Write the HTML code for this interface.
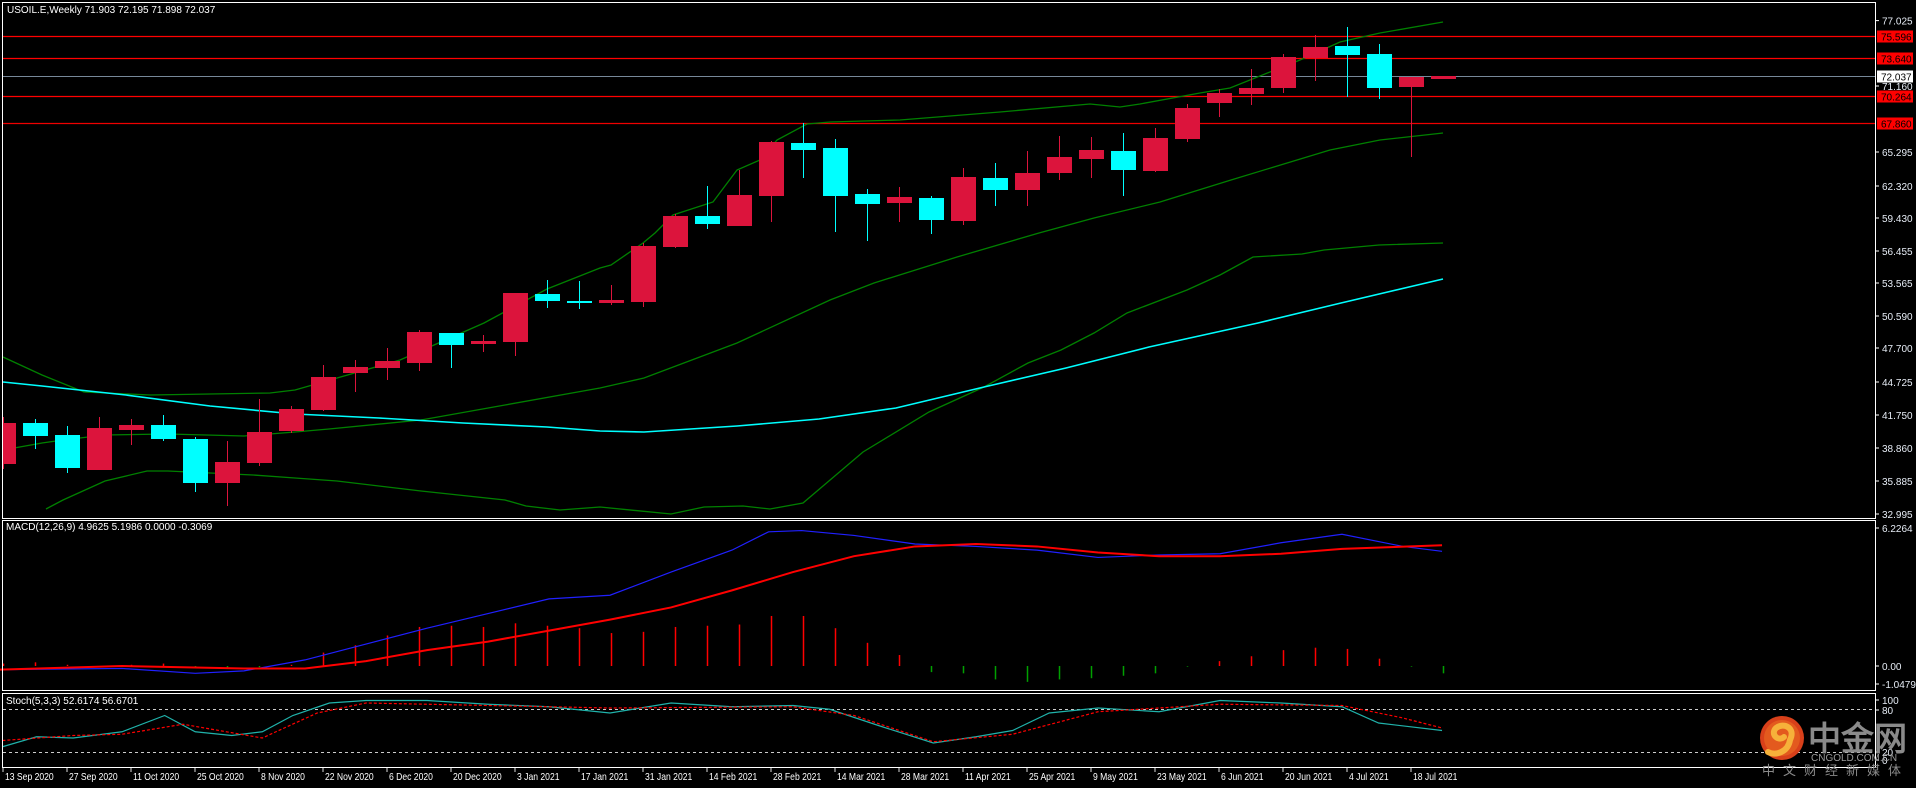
<!DOCTYPE html>
<html><head><meta charset="utf-8"><style>
html,body{margin:0;padding:0;background:#000;width:1916px;height:788px;overflow:hidden}
svg{display:block}
text{font-family:"Liberation Sans",sans-serif}
</style></head><body>
<svg id="s" width="1916" height="788" xmlns="http://www.w3.org/2000/svg">
<rect width="1916" height="788" fill="#000"/>
<g id="g"></g>
<g font-size="10" fill="#fff">
<text x="7" y="13">USOIL.E,Weekly  71.903 72.195 71.898 72.037</text>
<text x="6" y="530">MACD(12,26,9) 4.9625 5.1986 0.0000 -0.3069</text>
<text x="6" y="704">Stoch(5,3,3) 52.6174 56.6701</text>
</g>
<g font-size="10" fill="#e6ecf5" id="ax"></g>
<g id="dates" font-size="10" fill="#fff" transform="scale(0.86,1)"></g>
<g>
<circle cx="1782" cy="738" r="22" fill="#d8401a"/>
<circle cx="1782" cy="738" r="18" fill="#e35a1e"/>
<path d="M1790 740 C1796 728 1784 722 1776 728 C1770 734 1778 742 1784 737 M1790 740 C1788 752 1776 756 1768 752" stroke="#f6b13a" stroke-width="6" fill="none" stroke-linecap="round"/>
<text x="1808" y="750" font-size="33" font-weight="bold" fill="#8a8a8a" font-family="'Liberation Sans','Noto Sans CJK SC',sans-serif">中金网</text>
<text x="1811" y="761" font-size="10" fill="#9a9a9a">CNGOLD.COM.CN</text>
<text x="1762" y="775" font-size="13" fill="#8a8a8a" letter-spacing="8" font-family="'Liberation Sans','Noto Sans CJK SC',sans-serif">中文财经新媒体</text>
</g>
</svg>
<script>
var NS="http://www.w3.org/2000/svg",g=document.getElementById('g');
function el(t,a,p){var e=document.createElementNS(NS,t);for(var k in a)e.setAttribute(k,a[k]);(p||g).appendChild(e);return e;}
function pl(pts,c,w,d){el('polyline',{points:pts.map(function(p){return p[0]+','+p[1]}).join(' '),fill:'none',stroke:c,'stroke-width':w||1,'stroke-dasharray':d||''});}
[[36.5,'#f00'],[58.5,'#f00'],[96.5,'#f00'],[123.5,'#e00']].forEach(function(h){el('line',{x1:2,x2:1875,y1:h[0],y2:h[0],stroke:h[1],'stroke-width':1.3});});
el('line',{x1:2,x2:1875,y1:76.5,y2:76.5,stroke:'#778899','stroke-width':1});
// upper band
pl([[3,357],[42,375],[84,392],[150,395],[270,393],[295,390],[400,360],[484,323],[547,289],[600,268],[611,265],[643,243],[655,233],[673,215],[713,202],[737,170],[760,160],[777,140],[807,124],[830,122],[900,120],[1000,112],[1090,104],[1120,107],[1140,104],[1200,93],[1230,88],[1300,60],[1340,42],[1380,33],[1443,22]],'#008000',1.3);
// middle band
pl([[3,450],[42,443],[63,440],[105,435],[168,434],[244,436],[295,432],[329,429],[421,420],[505,405],[600,388],[644,378],[737,343],[830,300],[874,283],[957,257],[1039,233],[1094,218],[1160,202],[1231,180],[1330,150],[1380,140],[1443,133]],'#008000',1.3);
// lower band
pl([[46,509],[63,500],[105,481],[147,471],[168,471],[210,473],[253,475],[295,478],[337,481],[421,491],[505,500],[526,506],[560,510],[600,507],[671,514],[704,507],[743,506],[770,509],[803,503],[863,452],[929,412],[984,387],[1028,363],[1061,350],[1094,333],[1127,313],[1187,290],[1220,275],[1253,257],[1302,254],[1324,250],[1379,245],[1443,243]],'#008000',1.3);
// MA
pl([[3,382],[42,386],[126,395],[210,406],[295,414],[379,418],[463,423],[547,427],[600,431],[644,432],[737,426],[819,419],[896,408],[984,387],[1066,368],[1149,347],[1258,323],[1341,303],[1443,279]],'#00ffff',1.6);
var C=[[417,423,464,469,'r'],[419,423,436,449,'c'],[426,435,468,473,'c'],[417,428,470,470,'r'],[419,425,430,445,'r'],[415,425,439,441,'c'],[437,439,483,492,'c'],[441,462,483,506,'r'],[399,432,463,466,'r'],[406,409,431,433,'r'],
[365,377,410,411,'r'],[360,367,373,392,'r'],[348,361,368,380,'r'],[330,332,363,371,'r'],[333,333,345,368,'c'],[335,341,344,352,'r'],[293,293,342,356,'r'],[280,294,301,308,'c'],[281,301,303,309,'c'],[285,300,303,305,'r'],
[243,246,302,307,'r'],[214,216,247,248,'r'],[186,216,224,229,'c'],[170,195,226,226,'r'],[141,142,196,222,'r'],[123,143,150,178,'c'],[139,148,196,232,'c'],[189,194,204,241,'c'],[187,197,203,222,'r'],[196,198,220,234,'c'],
[168,177,221,225,'r'],[163,178,190,206,'c'],[151,173,190,206,'r'],[136,157,173,180,'r'],[137,150,159,178,'r'],[133,151,170,196,'c'],[128,138,171,172,'r'],[104,108,139,142,'r'],[89,93,103,117,'r'],[69,88,94,105,'r'],
[54,57,88,93,'r'],[35,47,58,81,'r'],[27,46,55,97,'c'],[44,54,88,99,'c'],[77,77,87,157,'r'],[76,76,79,79,'r']];
var clip=el('clipPath',{id:'cp'});el('rect',{x:3,y:3,width:1872,height:515},clip);
var cg=el('g',{'clip-path':'url(#cp)'});
C.forEach(function(c,i){var x=3+32*i,col=c[4]=='r'?'#dc143c':'#00ffff';
el('line',{x1:x+0.5,x2:x+0.5,y1:c[0],y2:c[3],stroke:col,'stroke-width':1},cg);
el('rect',{x:x-12,y:c[1],width:25,height:Math.max(2,c[2]-c[1]),fill:col},cg);});
function my(py){return 666-(545-py)*1.22;}
var H={10:534,11:528,12:520,13:513,14:512,15:513,16:510,17:512,18:514,19:518,20:517,21:513,22:512,23:511,24:504,25:504,26:514,27:526,28:536,29:550,30:551,31:556,32:558,33:556,34:555,35:553,36:551,37:545.5,38:541,39:537,40:532,41:530,42:531,43:539,44:545.5,45:551};
var small=[543,542,544,545,544,543,546,547,546,544];
for(var i=0;i<46;i++){var py=i<10?small[i]:H[i];var y=my(py),x=3+32*i+0.5;
el('line',{x1:x,x2:x,y1:666,y2:y,stroke:y>666?'#00a000':'#f00','stroke-width':1.5});}
function cv(a,f){return a.map(function(p){return [p[0]*1.22,f(p[1])];});}
pl(cv([[0,548],[100,547],[160,551],[200,549],[250,540],[300,527],[350,514],[400,502],[450,490],[500,487],[550,468],[600,450],[630,435],[657,434],[700,438],[750,445],[800,447],[850,450],[900,456],[950,454],[1000,453],[1050,444],[1100,437],[1150,447],[1182,451]],my),'#2020ff',1.2);
pl(cv([[0,548],[100,545],[200,547],[250,547],[300,541],[350,532],[400,525],[450,516],[500,507],[550,497],[600,483],[650,468],[700,455],[750,447],[800,445],[850,447],[900,452],[950,455],[1000,455],[1050,453],[1100,449],[1182,446]],my),'#f00',2);
el('line',{x1:3,x2:1875,y1:709.5,y2:709.5,stroke:'#ccc','stroke-dasharray':'3,3'});
el('line',{x1:3,x2:1875,y1:752.5,y2:752.5,stroke:'#ccc','stroke-dasharray':'3,3'});
function sy(py){return 693+(py-567)*1.25;}
pl(cv([[2,610],[30,602],[60,603],[100,598],[135,585],[160,598],[190,601],[215,598],[240,585],[270,575],[300,573],[350,573],[400,576],[450,578],[500,583],[550,575],[600,578],[650,577],[680,580],[720,593],[765,607],[800,602],[830,597],[860,583],[900,579],[950,582],[1000,573],[1050,575],[1100,578],[1130,591],[1182,597]],sy),'#20b2aa',1.2);
pl(cv([[2,605],[60,601],[100,600],[150,592],[215,603],[260,583],[300,575],[400,577],[500,579],[650,578],[700,585],[765,606],[830,600],[900,582],[1000,576],[1100,577],[1150,587],[1182,595]],sy),'#f00',1.2,'3,2');
[[2.5,2.5,1873,516],[2.5,520.5,1873,170],[2.5,693.5,1873,74]].forEach(function(r){el('rect',{x:r[0],y:r[1],width:r[2],height:r[3],fill:'none',stroke:'#fff','stroke-width':1});});
var ax=document.getElementById('ax');
var P=[['77.025',20.6],['65.295',152],['62.320',186],['59.430',218],['56.455',251],['53.565',283],['50.590',316],['47.700',348],['44.725',382],['41.750',415],['38.860',448],['35.885',481],['32.995',514],['71.160',86],['6.2264',528],['0.00',666],['-1.0479',684],['100',700],['80',710],['20',752],['0',760]];
P.forEach(function(p){el('line',{x1:1875,x2:1879,y1:p[1],y2:p[1],stroke:'#fff'},ax);var t=el('text',{x:1882,y:p[1]+4},ax);t.textContent=p[0];});
[['75.596',36.5],['73.640',58.5],['70.264',96.5],['67.860',123.5]].forEach(function(p){el('rect',{x:1877,y:p[1]-6,width:36,height:12,fill:'#f00'},ax);var t=el('text',{x:1881,y:p[1]+4,fill:'#000'},ax);t.textContent=p[0];});
el('rect',{x:1877,y:70.5,width:36,height:12,fill:'#fff'},ax);var t=el('text',{x:1881,y:80.5,fill:'#000'},ax);t.textContent='72.037';
var D=['13 Sep 2020','27 Sep 2020','11 Oct 2020','25 Oct 2020','8 Nov 2020','22 Nov 2020','6 Dec 2020','20 Dec 2020','3 Jan 2021','17 Jan 2021','31 Jan 2021','14 Feb 2021','28 Feb 2021','14 Mar 2021','28 Mar 2021','11 Apr 2021','25 Apr 2021','9 May 2021','23 May 2021','6 Jun 2021','20 Jun 2021','4 Jul 2021','18 Jul 2021'];
var dg=document.getElementById('dates');
D.forEach(function(d,k){var x=3+64*k;el('line',{x1:x/0.86,x2:x/0.86,y1:767,y2:772,stroke:'#fff'},dg);var t=el('text',{x:(x+2)/0.86,y:780},dg);t.textContent=d;});
</script>
</body></html>
